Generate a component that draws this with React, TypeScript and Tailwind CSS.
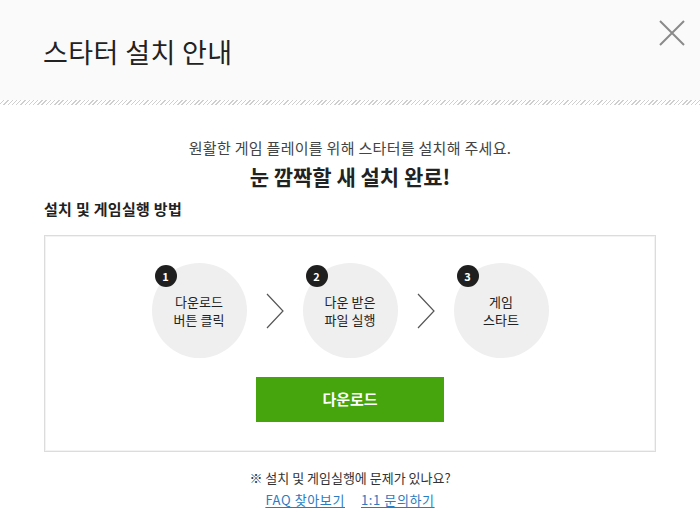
export default function App() {
    const steps = [
        { n: 1, lines: ["다운로드", "버튼 클릭"] },
        { n: 2, lines: ["다운 받은", "파일 실행"] },
        { n: 3, lines: ["게임", "스타트"] },
    ];

    return (
        <div className="w-[700px] h-[532px] bg-white relative overflow-hidden font-['Noto_Sans_CJK_KR',sans-serif] text-[#333]">
            {/* header */}
            <div className="h-[100px] bg-[#fafafa] flex items-center pl-[43px]">
                <h1 className="text-[27px] text-[#222] leading-none tracking-[0.4px] pt-[2px]">스타터 설치 안내</h1>
            </div>
            <div className="h-[5px] bg-[repeating-linear-gradient(-45deg,#cfcfcf_0px,#cfcfcf_1px,#ffffff_1px,#ffffff_3px)]" />
            <button className="absolute right-[14px] top-[19px] w-[28px] h-[28px]">
                <svg viewBox="0 0 28 28" className="w-[28px] h-[28px]">
                    <path d="M2 2L26 26M26 2L2 26" stroke="#8a8a8a" strokeWidth="2" fill="none" />
                </svg>
            </button>

            <div className="px-[44px]">
                <p className="mt-[33px] text-center text-[15px] text-[#444] leading-[20px] tracking-[0.3px]">
                    원활한 게임 플레이를 위해 스타터를 설치해 주세요.
                </p>
                <p className="mt-[6px] text-center text-[21px] font-bold text-[#222] leading-[24px]">
                    눈 깜짝할 새 설치 완료!
                </p>
                <p className="mt-[11px] text-[15px] font-bold text-[#222] leading-[20px] tracking-[0.3px]">설치 및 게임실행 방법</p>

                <div className="mt-[16px] h-[217px] border border-[#dcdcdc] shadow-[inset_0_0_0_1px_#f3f3f3] flex flex-col items-center">
                    <div className="mt-[27px] flex items-center">
                        {steps.map((s, i) => (
                            <div key={s.n} className="flex items-center">
                                {i > 0 && (
                                    <svg viewBox="0 0 20 36" className="w-[20px] h-[36px] mx-[18px]">
                                        <path d="M2 1L18 18L2 35" stroke="#555" strokeWidth="1.2" fill="none" />
                                    </svg>
                                )}
                                <div className="relative w-[95px] h-[95px] rounded-full bg-[#efefef] flex flex-col items-center justify-center text-[13px] leading-[18px] text-[#222]">
                                    {s.lines.map((l) => (
                                        <span key={l}>{l}</span>
                                    ))}
                                    <span className="absolute left-[3px] top-[2px] w-[22px] h-[22px] rounded-full bg-[#1f1f1f] text-white text-[11px] font-bold flex items-center justify-center leading-none">
                                        {s.n}
                                    </span>
                                </div>
                            </div>
                        ))}
                    </div>
                    <button className="mt-[19px] w-[188px] h-[45px] bg-[#46a40c] text-white text-[15px] font-bold">
                        다운로드
                    </button>
                </div>

                <p className="mt-[17px] text-center text-[13px] text-[#333] leading-[18px]">
                    ※ 설치 및 게임실행에 문제가 있나요?
                </p>
                <div className="mt-[4px] flex justify-center gap-[16px] text-[13px] leading-[18px] text-[#2b7bbf] tracking-[0.6px]">
                    <a className="underline underline-offset-2">FAQ 찾아보기</a>
                    <a className="underline underline-offset-2">1:1 문의하기</a>
                </div>
            </div>
        </div>
    );
}
